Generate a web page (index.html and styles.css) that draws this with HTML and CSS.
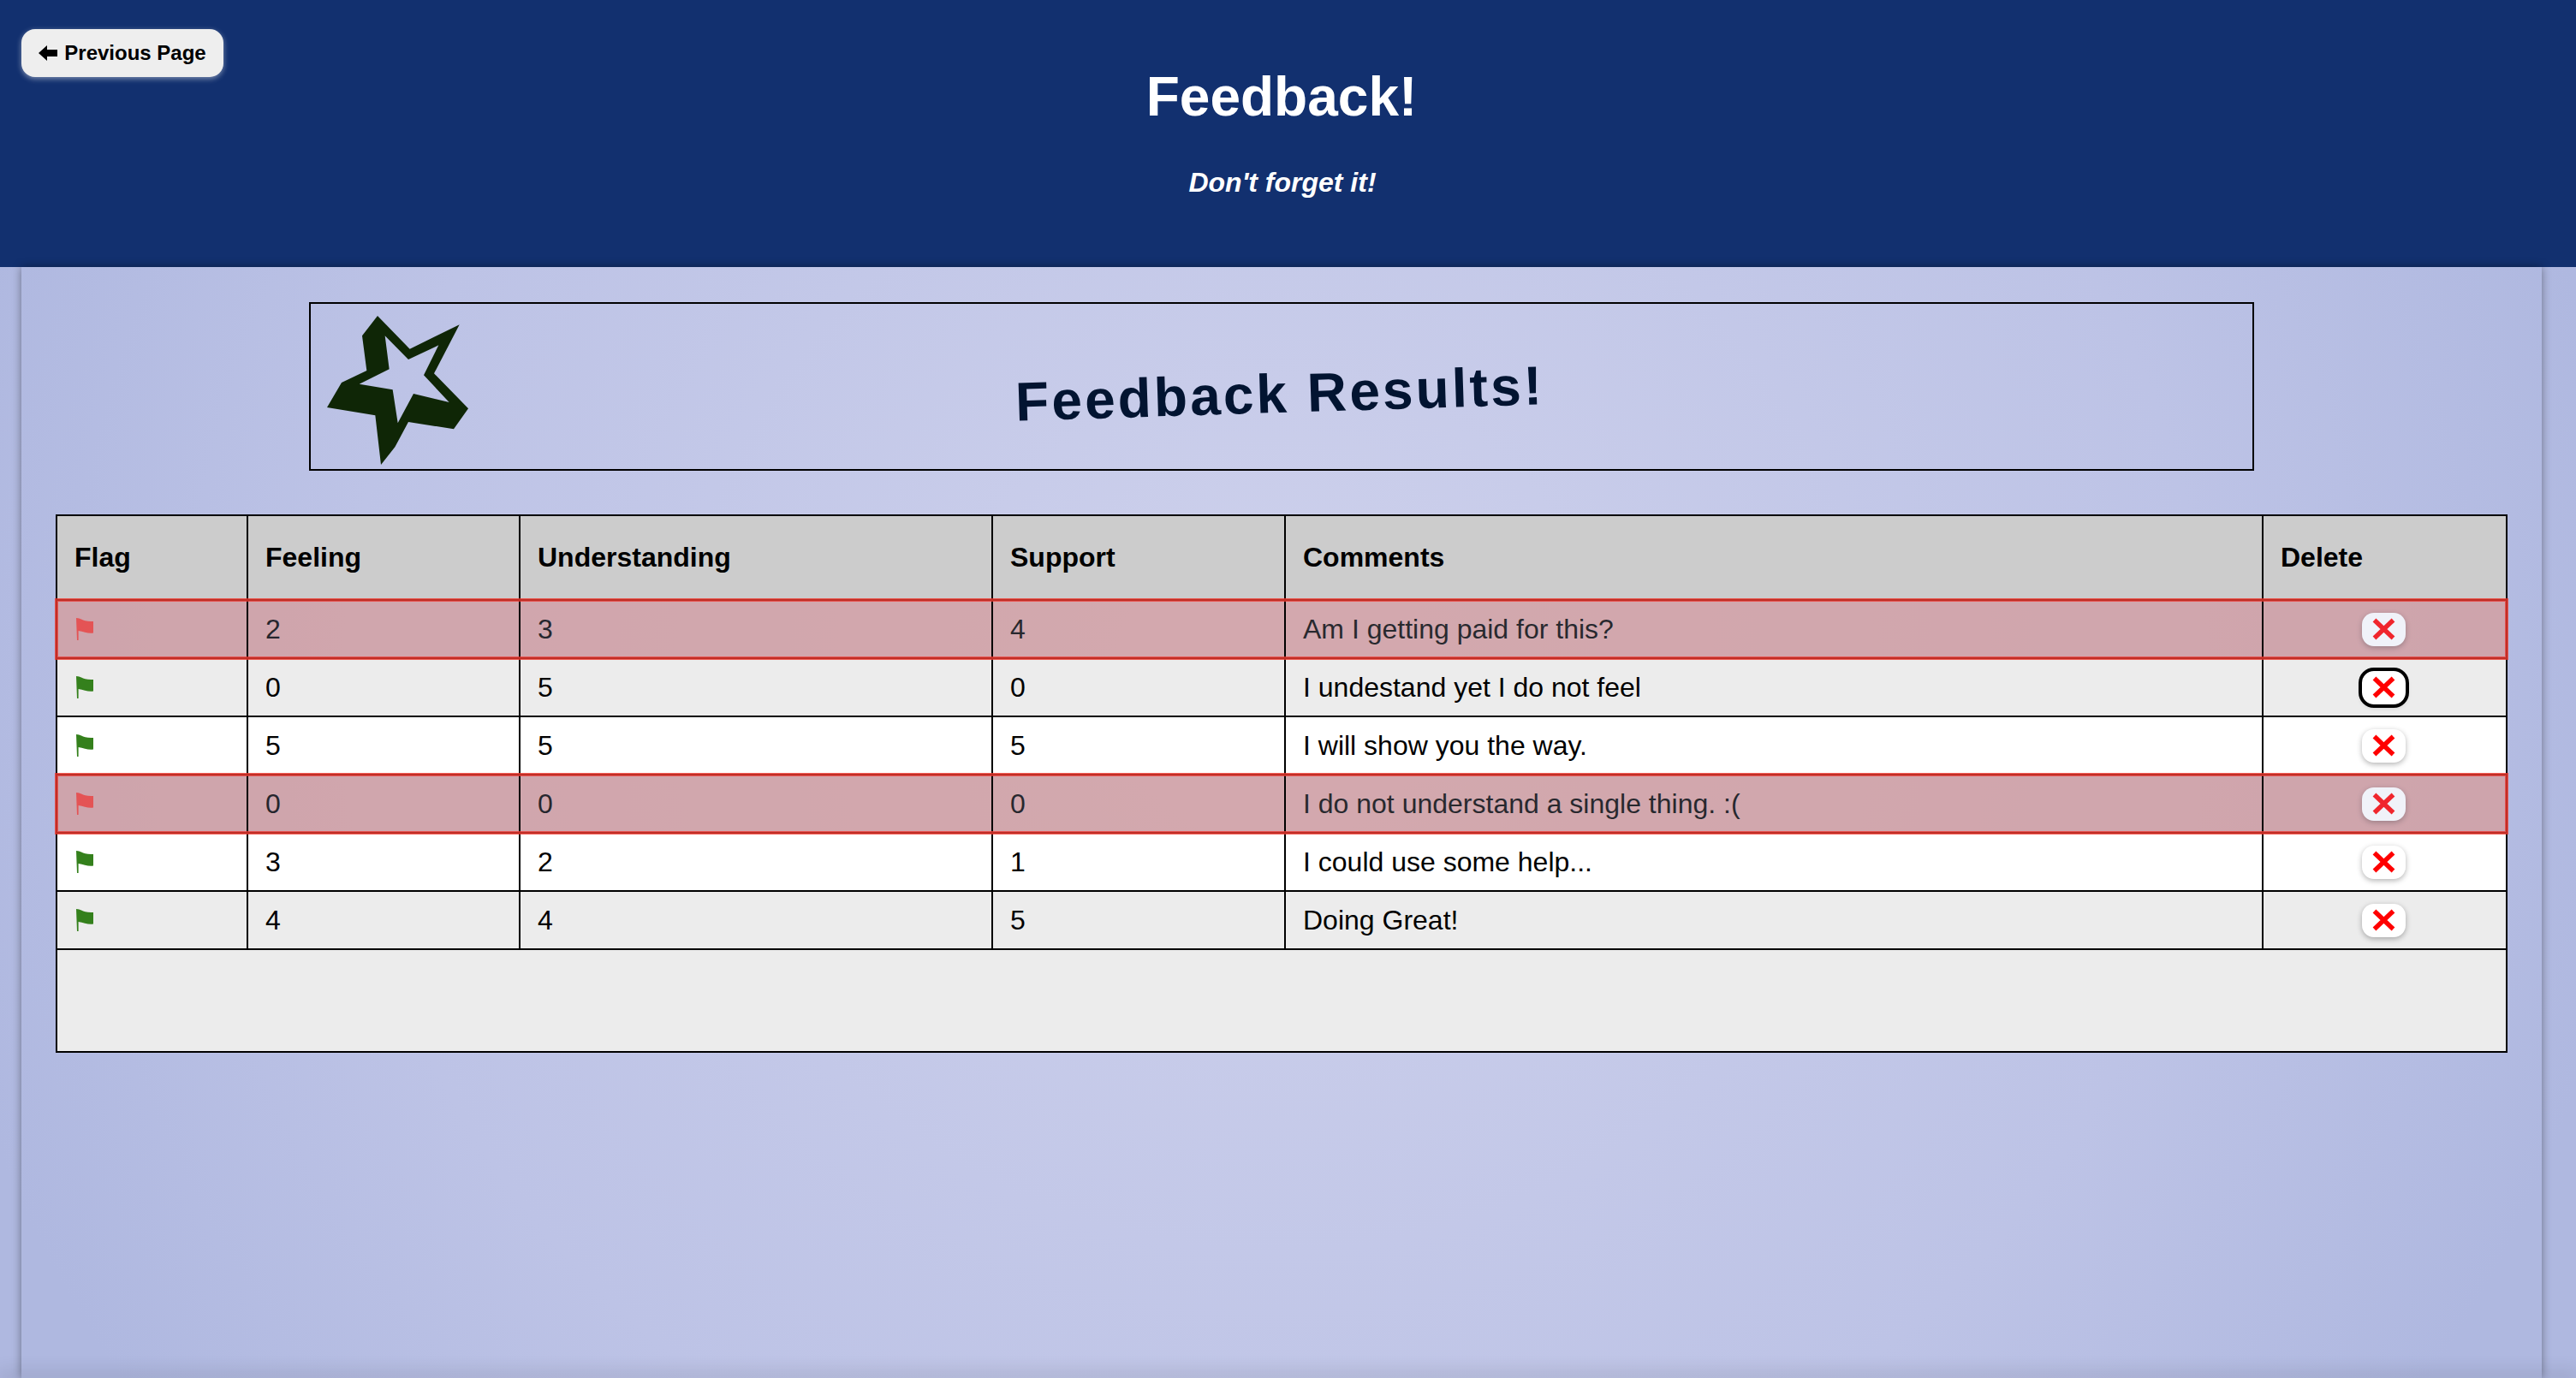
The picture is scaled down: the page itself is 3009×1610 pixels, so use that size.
FILE: index.html
```html
<!DOCTYPE html>
<html lang="en">
<head>
    <meta charset="UTF-8">
    <meta name="viewport" content="width=device-width, initial-scale=1.0">
    <title>Feedback!</title>
    <link rel="stylesheet" href="styles.css">
</head>
<body>
    <svg class="icon-defs" width="0" height="0" aria-hidden="true">
        <symbol id="flag" viewBox="0 0 20 26">
            <path d="M0 0 C3 .5 4 .5 6 1.5 C9 3 13 4.5 20 4 L20 17.5 C14 18.5 9 16 2.6 15 L2.6 26 L1 26 Z" fill="currentColor"/>
        </symbol>
        <symbol id="cross" viewBox="0 0 27 26">
            <path d="M2.5 2.5 L24.5 23.5 M24.5 2.5 L2.5 23.5" fill="none" stroke="currentColor" stroke-width="5.5" stroke-linecap="butt"/>
        </symbol>
    </svg>

    <header class="top-bar">
        <button class="back-btn" type="button">
            <svg class="back-arrow" viewBox="0 0 22 18" aria-hidden="true"><path d="M0 9 L10 0 L10 5 L22 5 L22 13 L10 13 L10 18 Z" fill="currentColor"/></svg>
            Previous Page
        </button>
        <h1 class="top-title">Feedback!</h1>
        <p class="top-tagline">Don't forget it!</p>
    </header>

    <main class="content">
        <div class="banner">
            <svg class="banner-star" viewBox="127 87 495 522" aria-hidden="true">
                <path fill-rule="evenodd" fill="#0f2606" d="M304 87 L417 203 L591 118 L502 289 L622 412 L571 484 L412 459 L365 547 L316 609 L296 436 L127 408 L178 321 L266 279 L250 157 Z M330 157 L345 274 L240 326 L357 346 L375 463 L430 360 L555 390 L466 295 L518 190 L412 240 Z"/>
            </svg>
            <h2 class="banner-title">Feedback Results!</h2>
        </div>

        <table class="results">
            <colgroup>
                <col class="col-flag">
                <col class="col-feeling">
                <col class="col-understanding">
                <col class="col-support">
                <col class="col-comments">
                <col class="col-delete">
            </colgroup>
            <thead>
                <tr>
                    <th>Flag</th>
                    <th>Feeling</th>
                    <th>Understanding</th>
                    <th>Support</th>
                    <th>Comments</th>
                    <th>Delete</th>
                </tr>
            </thead>
            <tbody>
                <tr class="flagged">
                    <td><svg class="flag flag-red"><use href="#flag"/></svg></td>
                    <td>2</td>
                    <td>3</td>
                    <td>4</td>
                    <td>Am I getting paid for this?</td>
                    <td class="delete-cell"><button class="delete-btn" type="button"><svg class="cross"><use href="#cross"/></svg></button></td>
                </tr>
                <tr>
                    <td><svg class="flag flag-green"><use href="#flag"/></svg></td>
                    <td>0</td>
                    <td>5</td>
                    <td>0</td>
                    <td>I undestand yet I do not feel</td>
                    <td class="delete-cell"><button class="delete-btn is-focused" type="button"><svg class="cross"><use href="#cross"/></svg></button></td>
                </tr>
                <tr>
                    <td><svg class="flag flag-green"><use href="#flag"/></svg></td>
                    <td>5</td>
                    <td>5</td>
                    <td>5</td>
                    <td>I will show you the way.</td>
                    <td class="delete-cell"><button class="delete-btn" type="button"><svg class="cross"><use href="#cross"/></svg></button></td>
                </tr>
                <tr class="flagged">
                    <td><svg class="flag flag-red"><use href="#flag"/></svg></td>
                    <td>0</td>
                    <td>0</td>
                    <td>0</td>
                    <td>I do not understand a single thing. :(</td>
                    <td class="delete-cell"><button class="delete-btn" type="button"><svg class="cross"><use href="#cross"/></svg></button></td>
                </tr>
                <tr>
                    <td><svg class="flag flag-green"><use href="#flag"/></svg></td>
                    <td>3</td>
                    <td>2</td>
                    <td>1</td>
                    <td>I could use some help...</td>
                    <td class="delete-cell"><button class="delete-btn" type="button"><svg class="cross"><use href="#cross"/></svg></button></td>
                </tr>
                <tr>
                    <td><svg class="flag flag-green"><use href="#flag"/></svg></td>
                    <td>4</td>
                    <td>4</td>
                    <td>5</td>
                    <td>Doing Great!</td>
                    <td class="delete-cell"><button class="delete-btn" type="button"><svg class="cross"><use href="#cross"/></svg></button></td>
                </tr>
            </tbody>
            <tfoot>
                <tr>
                    <td class="results-foot" colspan="6"></td>
                </tr>
            </tfoot>
        </table>
    </main>
    <div class="page-end"></div>
</body>
</html>
```

FILE: styles.css
```css
html, body {
    height: 100%;
}

body {
    font-family: "Liberation Sans", Arial, sans-serif;
    margin: 0;
    overflow: hidden;
    display: flex;
    flex-direction: column;
    background: radial-gradient(ellipse 1600px 1500px at 49.5% 50%, #ced1ec 0%, #bdc3e6 68%, #afb8e0 100%);
    background-color: #afb8e0;
}

.icon-defs {
    position: absolute;
}

.top-bar {
    position: relative;
    flex: none;
    box-sizing: border-box;
    height: 312px;
    padding: 76px 15px 0 0;
    background-color: #12306f;
    color: #fff;
    text-align: center;
}

.top-title {
    margin: 0;
    font-size: 64px;
    line-height: 74px;
}

.top-tagline {
    margin: 39px 0 0;
    padding-left: 2px;
    font-size: 32px;
    line-height: 48px;
    font-weight: bold;
    font-style: italic;
}

.back-btn {
    position: absolute;
    top: 34px;
    left: 25px;
    width: 236px;
    height: 56px;
    padding: 0;
    display: flex;
    align-items: center;
    justify-content: center;
    gap: 8px;
    border: none;
    border-radius: 16px;
    background-color: #eee;
    color: #000;
    font-family: inherit;
    font-size: 24px;
    font-weight: bold;
    box-shadow: 0 2px 6px rgba(255, 255, 255, 0.45);
}

.back-arrow {
    width: 22px;
    height: 18px;
}

.content {
    flex: 1;
    position: relative;
    margin: 0 40px 0 25px;
    padding: 41px 40px 0;
    box-shadow: 0 0 10px rgba(0, 0, 0, 0.4);
}

.page-end {
    flex: none;
    height: 0;
    position: relative;
    box-shadow: 0 0 22px 4px rgba(0, 0, 0, 0.22);
}

.banner {
    box-sizing: border-box;
    width: 2272px;
    height: 197px;
    margin: 0 auto 51px;
    padding: 0 19px;
    display: grid;
    grid-template-columns: 1fr auto 1fr;
    border: 2px solid #000;
}

.banner-star {
    width: 165px;
    height: 174px;
    align-self: end;
    margin-bottom: 5px;
}

.banner-title {
    margin: 17px 4px 0 0;
    align-self: center;
    font-size: 64px;
    line-height: 74px;
    letter-spacing: 3.1px;
    color: #021431;
    transform: rotate(-1.8deg);
}

.results {
    width: 2862px;
    table-layout: fixed;
    border-collapse: collapse;
    font-size: 32px;
    color: #000;
}

.col-flag { width: 223px; }
.col-feeling { width: 318px; }
.col-understanding { width: 552px; }
.col-support { width: 342px; }
.col-comments { width: 1142px; }
.col-delete { width: 285px; }

.results th,
.results td {
    border: 2px solid #000;
    padding: 0 20px;
    text-align: left;
    background-color: #fff;
}

.results th {
    height: 97px;
    background-color: #ccc;
}

.results td {
    height: 66px;
}

.results tbody tr:nth-child(even) td {
    background-color: #ececec;
}

.results tbody tr.flagged {
    opacity: 0.8;
    outline: 4px solid #f03a30;
    outline-offset: -2px;
}

.results tbody tr.flagged td {
    background-color: #d59f9f;
}

.results .results-foot {
    height: 118px;
    background-color: #ececec;
}

.flag {
    display: block;
    width: 20px;
    height: 26px;
    margin-left: 2px;
}

.flag-green {
    color: #34801c;
}

.flag-red {
    color: #f03a32;
}

.results .delete-cell {
    padding: 0 21px 0 18px;
}

.delete-btn {
    width: 51px;
    height: 39px;
    margin: 0 auto;
    padding: 0;
    display: flex;
    align-items: center;
    justify-content: center;
    border: none;
    border-radius: 14px;
    background-color: #fff;
    color: #f00;
    box-shadow: 0 2px 6px rgba(0, 0, 0, 0.3);
}

.delete-btn.is-focused {
    outline: 4px solid #000;
}

.cross {
    width: 27px;
    height: 26px;
}
```
